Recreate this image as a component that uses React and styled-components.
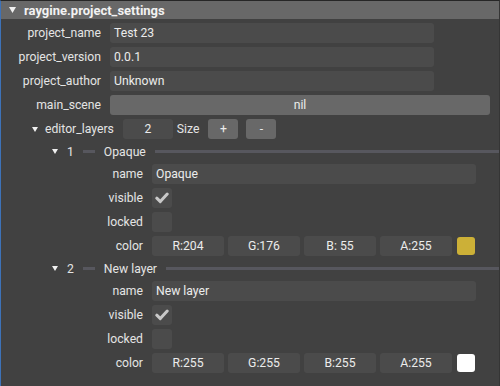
import React from 'react';
import styled, { createGlobalStyle } from 'styled-components';

const GlobalStyle = createGlobalStyle`
  body {
    margin: 0;
    background: #414141;
    font-family: Roboto, "Liberation Sans", sans-serif;
    font-size: 12.2px;
    color: #e4e4e4;
  }
`;

const Window = styled.div`
  width: 500px;
  height: 386px;
  box-sizing: border-box;
  overflow: hidden;
  background: #414141;
  border-top: 1px solid #262626;
  border-left: 1px solid #3d72b8;
  border-right: 1px solid #353535;
`;

const Header = styled.div`
  display: flex;
  align-items: center;
  gap: 8px;
  height: 18px;
  padding-left: 8px;
  background: #686868;
  color: #f2f2f2;
  font-weight: bold;
  font-size: 13px;
`;

const Body = styled.div`
  display: flex;
  flex-direction: column;
  gap: 4px;
  padding-top: 4px;
`;

const Row = styled.div`
  display: flex;
  align-items: center;
  height: 20px;
  gap: 9px;
  padding-left: ${(p) => p.$indent || 0}px;
`;

const Label = styled.div`
  width: ${(p) => p.$width}px;
  flex-shrink: 0;
  text-align: right;
  white-space: nowrap;
`;

const Input = styled.div`
  box-sizing: border-box;
  width: ${(p) => p.$width || 324}px;
  height: 20px;
  line-height: 20px;
  padding: 0 4px;
  border-radius: 3px;
  background: #4b4b4b;
  color: #ececec;
  text-align: ${(p) => (p.$center ? 'center' : 'left')};
`;

const Button = styled.div`
  box-sizing: border-box;
  width: ${(p) => p.$width}px;
  height: 20px;
  line-height: 20px;
  border-radius: 3px;
  background: ${(p) => (p.$light ? '#686868' : '#4b4b4b')};
  color: #ececec;
  text-align: center;
  margin-left: ${(p) => p.$ml || 0}px;
  flex-shrink: 0;
`;

const Checkbox = styled.div`
  width: 20px;
  height: 20px;
  border-radius: 3px;
  background: #4b4b4b;
  display: flex;
  align-items: center;
  justify-content: center;
`;

const Plain = styled.span`
  margin-left: ${(p) => p.$ml || 0}px;
`;

const LayerHeader = styled.div`
  display: flex;
  align-items: center;
  height: 17px;
  gap: 9px;
  padding-left: 51px;
`;

const Rule = styled.div`
  height: 3px;
  background: #57575e;
  width: ${(p) => (p.$width ? `${p.$width}px` : 'auto')};
  flex: ${(p) => (p.$width ? '0 0 auto' : '1')};
`;

const ColorRow = styled.div`
  display: flex;
  align-items: center;
  gap: 4px;
`;

const Swatch = styled.div`
  width: 18px;
  height: 18px;
  margin-left: 1px;
  border-radius: 3px;
  background: ${(p) => p.$color};
`;

const Arrow = ({ size = 6 }) => (
  <svg width={size} height={size - 1} viewBox="0 0 6 5">
    <polygon points="0,0 6,0 3,5" fill="#f0f0f0" />
  </svg>
);

const Check = () => (
  <svg width="14" height="12" viewBox="0 0 14 12">
    <path d="M1.8 6.2 L5.3 9.6 L12.2 2" fill="none" stroke="#c8c8c8" strokeWidth="3" strokeLinecap="round" strokeLinejoin="round" />
  </svg>
);

const layers = [
  { id: 1, name: 'Opaque', visible: true, rgba: ['R:204', 'G:176', 'B: 55', 'A:255'], color: '#ccb037' },
  { id: 2, name: 'New layer', visible: true, rgba: ['R:255', 'G:255', 'B:255', 'A:255'], color: '#ffffff' },
];

const Layer = ({ layer }) => (
  <>
    <LayerHeader>
      <Arrow />
      <span>{layer.id}</span>
      <Rule $width={12} />
      <span>{layer.name}</span>
      <Rule />
    </LayerHeader>
    <Row>
      <Label $width={142}>name</Label>
      <Input>{layer.name}</Input>
    </Row>
    <Row>
      <Label $width={142}>visible</Label>
      <Checkbox>{layer.visible && <Check />}</Checkbox>
    </Row>
    <Row>
      <Label $width={142}>locked</Label>
      <Checkbox />
    </Row>
    <Row>
      <Label $width={142}>color</Label>
      <ColorRow>
        {layer.rgba.map((c) => (
          <Button key={c} $width={72}>{c}</Button>
        ))}
        <Swatch $color={layer.color} />
      </ColorRow>
    </Row>
  </>
);

const App = () => (
  <>
    <GlobalStyle />
    <Window>
      <Header>
        <Arrow size={7} />
        <span>raygine.project_settings</span>
      </Header>
      <Body>
        <Row>
          <Label $width={100}>project_name</Label>
          <Input>Test 23</Input>
        </Row>
        <Row>
          <Label $width={100}>project_version</Label>
          <Input>0.0.1</Input>
        </Row>
        <Row>
          <Label $width={100}>project_author</Label>
          <Input>Unknown</Input>
        </Row>
        <Row>
          <Label $width={100}>main_scene</Label>
          <Button $width={380} $light>nil</Button>
        </Row>
        <Row $indent={31} style={{ gap: 0 }}>
          <Arrow />
          <Plain $ml={7}>editor_layers</Plain>
          <Button $width={50} $ml={9}>2</Button>
          <Plain $ml={4}>Size</Plain>
          <Button $width={30} $ml={9} $light>+</Button>
          <Button $width={30} $ml={8} $light>-</Button>
        </Row>
        {layers.map((l) => (
          <Layer key={l.id} layer={l} />
        ))}
      </Body>
    </Window>
  </>
);

export default App;
